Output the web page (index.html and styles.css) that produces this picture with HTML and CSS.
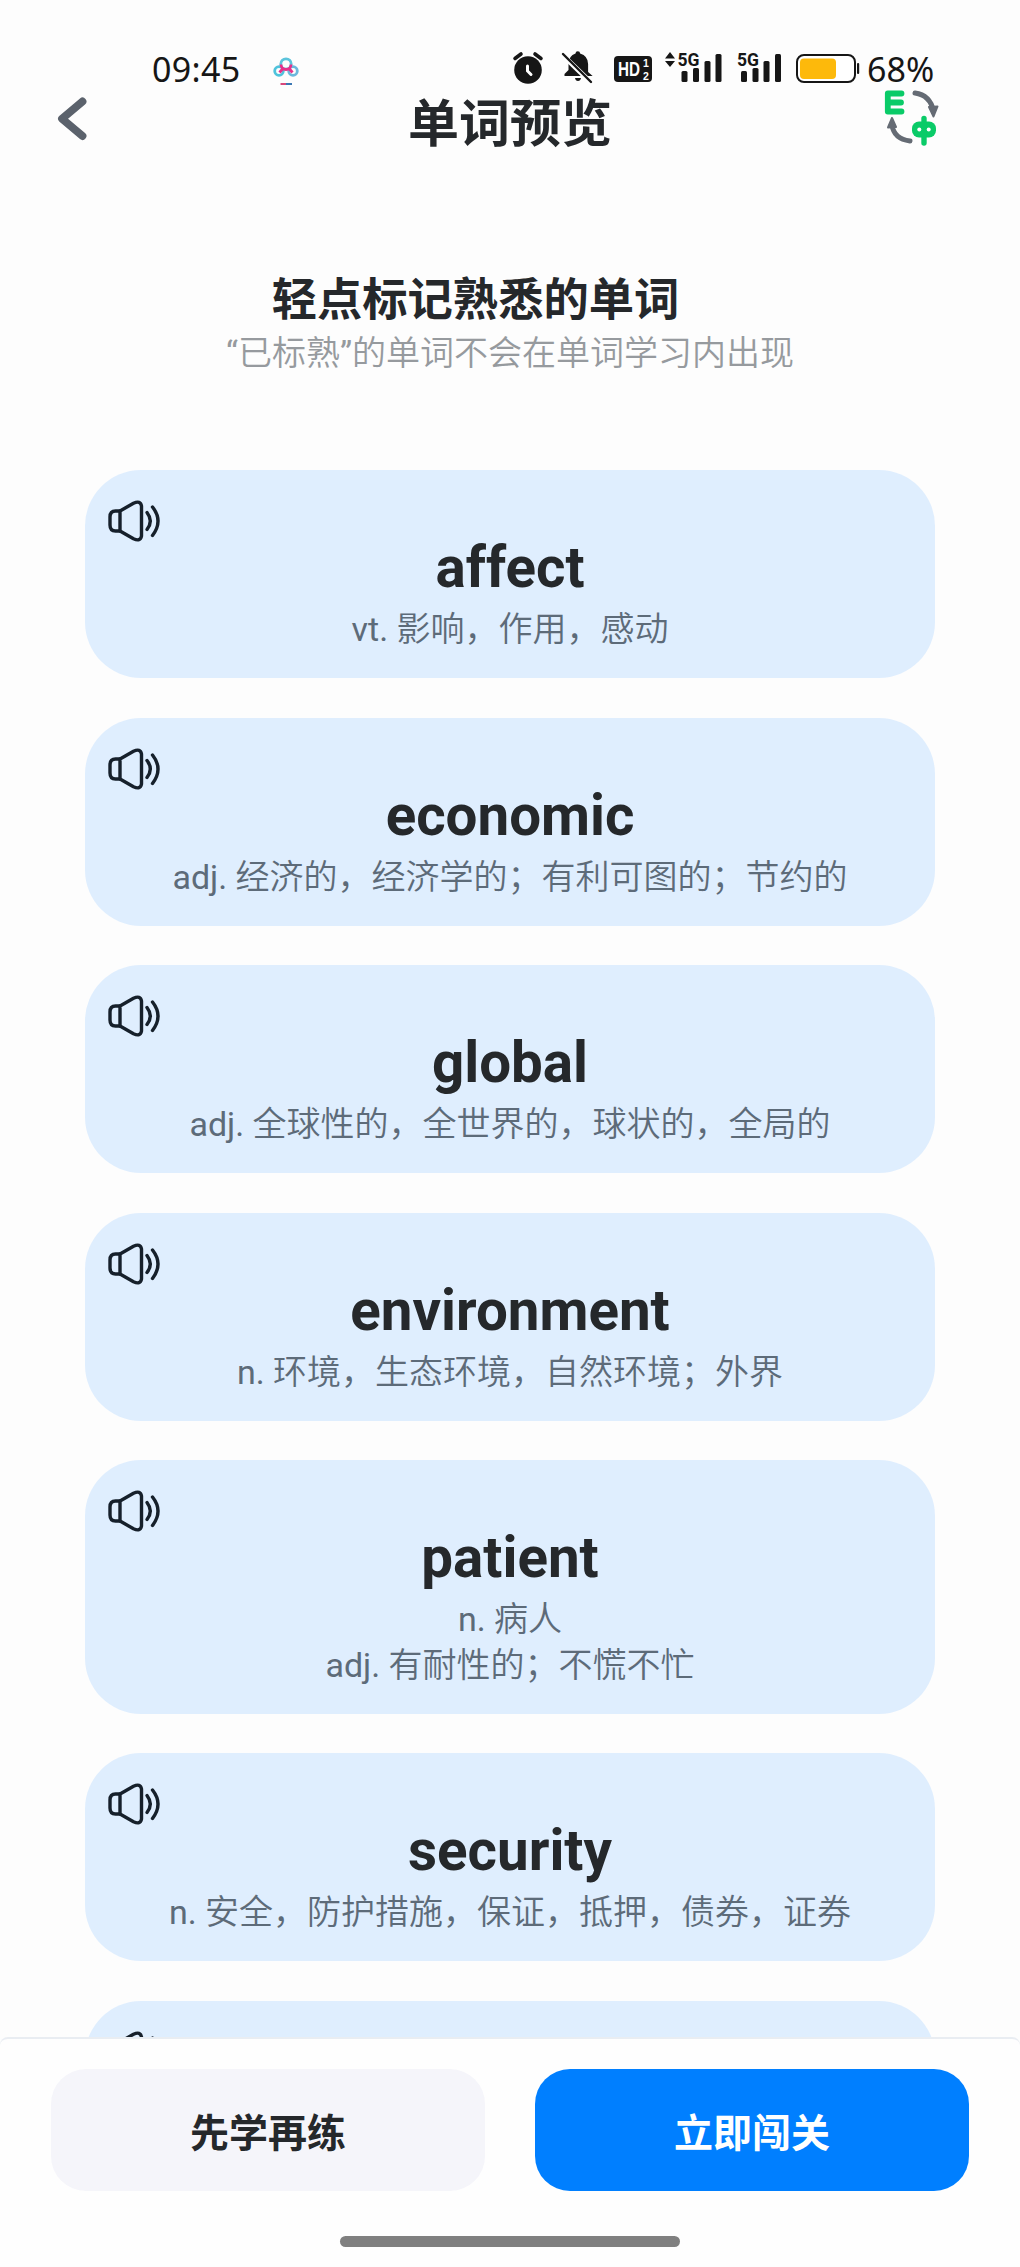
FILE: index.html
```html
<!DOCTYPE html>
<html lang="zh-CN">
<head>
<meta charset="utf-8">
<title>单词预览</title>
<link rel="stylesheet" href="styles.css">
</head>
<body>
<svg class="defs" aria-hidden="true">
  <symbol id="speaker" viewBox="0 0 54 42">
    <g fill="none" stroke="#16202b" stroke-width="3.400" stroke-linecap="round" stroke-linejoin="round">
      <path d="M13 11H8.500Q3 11 3 17V25Q3 31 8.500 31H13"/>
      <path d="M13 11L26.500 3.200Q33.500 0 34.500 6V36Q33.500 42 26.500 38.800L13 31Z"/>
      <path d="M40 12.500Q46.600 21 40 29.500"/>
      <path d="M45.500 7Q56.500 21 45.500 35.500"/>
    </g>
  </symbol>
</svg>
<div class="screen">
  <div class="status">
    <span class="clock">09:45</span>
    <svg class="cloud" width="26" height="30" viewBox="0 0 26 30" fill="none" stroke-width="2.800">
      <circle cx="6" cy="14" r="4.300" stroke="#4fc3dc"/>
      <circle cx="20" cy="14" r="4.300" stroke="#6cb8dc"/>
      <circle cx="13" cy="7" r="5.200" stroke="#5cc4dc"/>
      <path d="M8 7.500a5 5 0 0 0 10 0M9.500 12l-3 3.500M16.500 12l3 3.500" stroke="#e8308a"/>
      <path d="M7.500 27H14" stroke="#d8487c" stroke-width="2"/><path d="M13 27h6" stroke="#3c78b4" stroke-width="2"/>
    </svg>
    <svg class="sys" width="350" height="40" viewBox="510 48 350 40">
      <g fill="#161616" stroke="none">
        <circle cx="528" cy="70" r="13.800"/>
        <path d="M515 58.500L521 54M535 54L541 58.500" stroke="#161616" stroke-width="3.600" stroke-linecap="round"/>
        <path d="M527.500 66V71L531 74.500" stroke="#fff" stroke-width="3" fill="none" stroke-linecap="round"/>
        <path d="M575.500 53.500a2.300 2.300 0 0 1 4.600 0q8 2.500 8 10.500v8l4.500 4H564.500v-2l4-4v-6q0-8 7-10.500zM575 78h6q-.500 3-3 3t-3-3z"/>
        <path d="M562 54.500L592 83.500" stroke="#fff" stroke-width="5"/>
        <path d="M563 54L591 82" stroke="#161616" stroke-width="2.400" stroke-linecap="round"/>
        <rect x="614" y="56" width="38" height="26" rx="4"/>
        <text class="hd" x="618" y="76.300" textLength="22" lengthAdjust="spacingAndGlyphs">HD</text>
        <text class="tiny" x="643" y="67.200">1</text><text class="tiny" x="643" y="79.800">2</text>
        <path d="M665 58.500L670 52L675 58.500ZM665 61L670 67L675 61Z"/>
        <text class="net" x="677.500" y="66.200" textLength="22" lengthAdjust="spacingAndGlyphs">5G</text>
        <rect x="681.500" y="71" width="6" height="11" rx="1.500"/><rect x="693" y="68" width="6" height="14" rx="1.500"/><rect x="704.500" y="61" width="6" height="21" rx="1.500"/><rect x="715.500" y="54" width="6" height="28" rx="1.500"/>
        <text class="net" x="737" y="66.200" textLength="22" lengthAdjust="spacingAndGlyphs">5G</text>
        <rect x="741" y="71" width="6" height="11" rx="1.500"/><rect x="752.500" y="68" width="6" height="14" rx="1.500"/><rect x="763.500" y="61" width="6" height="21" rx="1.500"/><rect x="775" y="54" width="6" height="28" rx="1.500"/>
        <rect x="797" y="55" width="58" height="27" rx="7" fill="#fff" stroke="#161616" stroke-width="2"/>
        <rect x="800" y="58.500" width="36" height="20.500" rx="4" fill="#fdb90b"/>
        <rect x="857" y="63" width="2.200" height="11" rx="1"/>
      </g>
    </svg>
    <span class="percent">68%</span>
  </div>
  <header class="header">
    <svg width="60" height="60" viewBox="40 88 60 60"><path d="M82.500 101.500L62 118.800L82.500 136" fill="none" stroke="#5b626c" stroke-width="7.800" stroke-linecap="round" stroke-linejoin="round"/></svg>
    <h1>单词预览</h1>
    <svg width="60" height="60" viewBox="880 88 60 60" fill="none" stroke-linecap="round" stroke-linejoin="round">
      <path d="M901.500 93.500H887.800V111.500H901.500M888 102.500H901" stroke="#0acb68" stroke-width="5.800"/>
      <path d="M915 93Q930 95 933.500 111M910 141Q894 139 892 125" stroke="#656b74" stroke-width="5"/>
      <path d="M929 107L937.500 106.500L933.500 116.500ZM888 127.500L896 127L892 118Z" fill="#656b74" stroke="#656b74" stroke-width="2"/>
      <rect x="912" y="121.500" width="24" height="16" rx="7" fill="#0acb68"/>
      <path d="M924 118.500V143" stroke="#0acb68" stroke-width="5.400"/>
      <circle cx="919.300" cy="129.500" r="2" fill="#fff"/><circle cx="928.700" cy="129.500" r="2" fill="#fff"/>
    </svg>
  </header>
  <section class="intro">
    <h2>轻点标记熟悉的单词</h2>
    <p><span>“</span>已标熟<span>”</span>的单词不会在单词学习内出现</p>
  </section>
  <main class="cards">
    <article class="card"><svg class="speaker"><use href="#speaker"/></svg><h3>affect</h3><p><span>vt.</span> 影响，作用，感动</p></article>
    <article class="card"><svg class="speaker"><use href="#speaker"/></svg><h3>economic</h3><p><span>adj.</span> 经济的，经济学的；有利可图的；节约的</p></article>
    <article class="card"><svg class="speaker"><use href="#speaker"/></svg><h3>global</h3><p><span>adj.</span> 全球性的，全世界的，球状的，全局的</p></article>
    <article class="card"><svg class="speaker"><use href="#speaker"/></svg><h3>environment</h3><p><span>n.</span> 环境，生态环境，自然环境；外界</p></article>
    <article class="card"><svg class="speaker"><use href="#speaker"/></svg><h3>patient</h3><p><span>n.</span> 病人</p><p><span>adj.</span> 有耐性的；不慌不忙</p></article>
    <article class="card"><svg class="speaker"><use href="#speaker"/></svg><h3>security</h3><p><span>n.</span> 安全，防护措施，保证，抵押，债券，证券</p></article>
    <article class="card"><svg class="speaker"><use href="#speaker"/></svg></article>
  </main>
  <footer class="footer">
    <div class="actions">
      <button class="btn">先学再练</button>
      <button class="btn primary">立即闯关</button>
    </div>
    <div class="home"></div>
  </footer>
</div>
</body>
</html>
```
FILE: styles.css
```css
* { box-sizing: border-box; margin: 0; padding: 0; }
body { background: #fdfdfd; font-family: Roboto, "Noto Sans CJK SC", sans-serif; color: #25282b; }
.defs { position: absolute; width: 0; height: 0; }
.screen { width: 1020px; height: 2267px; display: flex; flex-direction: column; overflow: hidden; }
.status { height: 88px; flex: none; display: flex; align-items: flex-start; padding: 48px 84px 0 152px; font-family: "Noto Sans", sans-serif; font-size: 34px; line-height: 42px; color: #161616; }
.clock { width: 121px; letter-spacing: .3px; }
.cloud { margin-top: 9px; }
.sys { margin-left: auto; }
.percent { width: 76px; padding-left: 7px; }
.hd { font: bold 20px "Liberation Sans", sans-serif; fill: #fff; }
.tiny { font: bold 10.500px "Liberation Sans", sans-serif; fill: #fff; }
.net { font: bold 18.500px Roboto, sans-serif; }
.header { height: 64px; flex: none; display: flex; align-items: flex-start; justify-content: space-between; padding: 0 80px 0 40px; }
.header h1 { font-size: 51px; line-height: 74px; font-weight: 700; margin-left: 40px; }
.intro { height: 318px; flex: none; padding-top: 123px; text-align: center; }
.intro h2 { font-size: 45.300px; line-height: 52px; font-weight: 700; padding-right: 69px; }
.intro p { font-size: 34px; line-height: 53px; font-weight: 350; color: #969a9e; }
.intro p span, .card p span { font-weight: 400; }
.cards { flex: 1; min-height: 0; overflow: hidden; display: flex; flex-direction: column; gap: 39.600px; padding: 0 85px; }
.card { flex: none; min-height: 208px; padding: 30px 22px 25.500px; border-radius: 56px; background: #dfeefe; text-align: center; }
.speaker { display: block; width: 54px; height: 42px; margin-bottom: -7px; }
.card h3 { font-size: 56.500px; line-height: 67px; font-weight: 700; margin-bottom: 5px; }
.card p { font-size: 34px; line-height: 45.500px; font-weight: 350; color: #5d6b79; }
.footer { height: 230px; flex: none; display: flex; flex-direction: column; align-items: center; background: #fefefe; border-top: 2px solid #e9edf2; border-radius: 8px 8px 0 0; }
.actions { width: 100%; display: flex; gap: 50px; padding: 30px 51px 0; height: 197px; }
.btn { flex: 1; height: 122px; border: 0; border-radius: 35px; background: #f5f5fa; color: #25282b; font: 700 39px "Noto Sans CJK SC", sans-serif; }
.primary { background: #007fff; color: #fff; }
.home { width: 340px; height: 11px; border-radius: 6px; background: #808080; }
```
